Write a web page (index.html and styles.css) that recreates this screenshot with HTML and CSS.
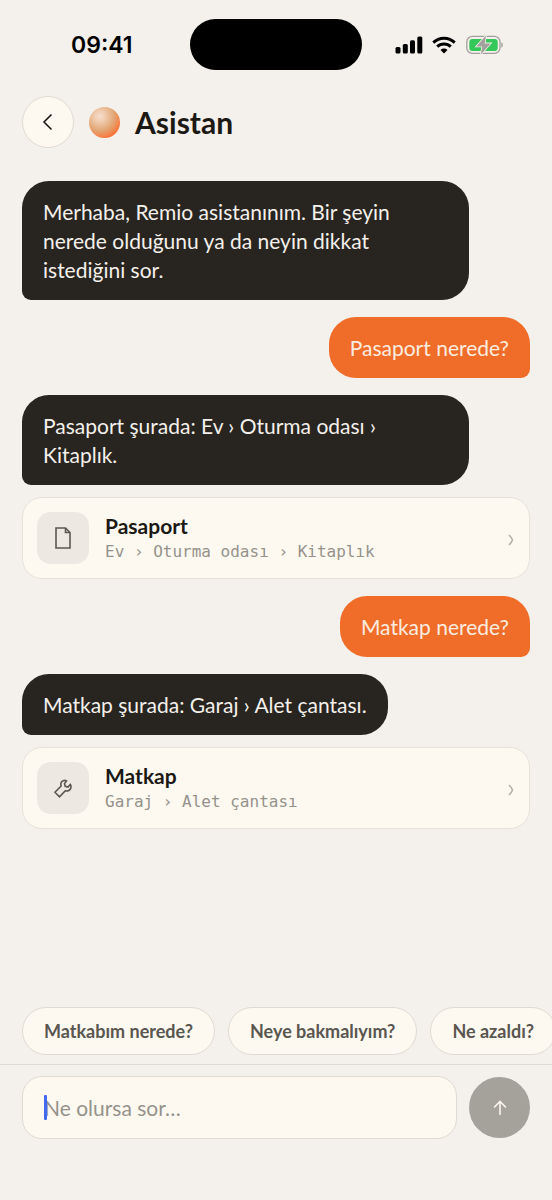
FILE: index.html
```html
<!DOCTYPE html>
<html lang="tr">
<head>
<meta charset="utf-8">
<meta name="viewport" content="width=device-width, initial-scale=1">
<title>Asistan</title>
<link rel="stylesheet" href="styles.css">
</head>
<body>
<div class="app">
  <div class="status">
    <time class="clock">09:41</time>
    <div class="island"></div>
    <div class="indicators">
      <svg width="28" height="18" viewBox="0 0 28 18" aria-hidden="true"><rect x="0.5" y="11" width="5" height="6.5" rx="1.5"/><rect x="7.8" y="8" width="5" height="9.5" rx="1.5"/><rect x="15" y="4.3" width="5" height="13.2" rx="1.5"/><rect x="22.3" y="0.5" width="5" height="17" rx="1.5"/></svg>
      <svg width="24" height="18" viewBox="0 0 24 18" aria-hidden="true"><g fill="none" stroke="#000" stroke-width="3"><path d="M1.3 6.6a15.3 15.3 0 0 1 21.4 0"/><path d="M5.2 10.7a9.8 9.8 0 0 1 13.6 0"/></g><path d="M12 17.6l-3.500-3.700a5 5 0 0 1 7 0z"/></svg>
      <svg width="38" height="20" viewBox="-1 0 38 20" aria-hidden="true"><rect x="0.8" y="1.4" width="33.200" height="17" rx="5.500" fill="none" stroke="#a3a19d" stroke-width="1.300"/><path d="M35.300 7.300v5.400c2-.8 2-4.600 0-5.400z" fill="#a3a19d"/><rect x="3.300" y="3.900" width="28.400" height="12" rx="3" fill="#34c759"/><path d="M20 0.500L10.300 11.400h6L14.800 19.500 24.700 8.400h-6z" fill="#a3a19d" stroke="#f4f0eb" stroke-width="1.600" paint-order="stroke"/></svg>
    </div>
  </div>
  <header class="header">
    <button class="back" type="button" aria-label="Geri"><svg width="12" height="18" viewBox="0 0 12 18"><path d="M9.500 1.500L2 9l7.500 7.500"/></svg></button>
    <span class="orb"></span>
    <h1 class="title">Asistan</h1>
  </header>
  <main class="chat">
    <p class="bubble bot">Merhaba, Remio asistanınım. Bir şeyin nerede olduğunu ya da neyin dikkat istediğini sor.</p>
    <p class="bubble user">Pasaport nerede?</p>
    <div class="answer">
      <p class="bubble bot">Pasaport şurada: Ev › Oturma odası › Kitaplık.</p>
      <a class="card" href="#pasaport">
        <span class="tile"><svg width="24" height="26" viewBox="0 0 24 26"><path d="M5 3h9.500l4.500 4.500V23H5zM14.500 3v4.500H19"/></svg></span>
        <span class="info"><strong class="name">Pasaport</strong><span class="path">Ev › Oturma odası › Kitaplık</span></span>
        <svg class="more" width="6" height="16" viewBox="0 -4 6 16"><path d="M1 1q3 3 3.500 5-.5 2-3.500 5"/></svg>
      </a>
    </div>
    <p class="bubble user">Matkap nerede?</p>
    <div class="answer">
      <p class="bubble bot">Matkap şurada: Garaj › Alet çantası.</p>
      <a class="card" href="#matkap">
        <span class="tile"><svg width="24" height="26" viewBox="0 0 24 26"><path d="M15.500 6c-2-1.400-5-.2-5.600 2.300-.2 1 0 1.900.2 2.700L4 17.300l4.500 4.500 5.900-6.100c2.300.8 4.900-.5 5.500-3 .3-1.200.1-2.500-.6-3.300L17 12 14.200 11.300 13.500 8.600z"/></svg></span>
        <span class="info"><strong class="name">Matkap</strong><span class="path">Garaj › Alet çantası</span></span>
        <svg class="more" width="6" height="16" viewBox="0 -4 6 16"><path d="M1 1q3 3 3.500 5-.5 2-3.500 5"/></svg>
      </a>
    </div>
  </main>
  <div class="chips">
    <button class="chip" type="button">Matkabım nerede?</button>
    <button class="chip" type="button">Neye bakmalıyım?</button>
    <button class="chip" type="button">Ne azaldı?</button>
  </div>
  <form class="composer">
    <div class="field">
      <input class="input" type="text" placeholder="Ne olursa sor…" aria-label="Mesaj">
      <span class="caret"></span>
    </div>
    <button class="send" type="button" aria-label="Gönder"><svg width="16" height="18" viewBox="0 0 16 18"><path d="M8 16V3M2 8.500L8 2.500l6 6"/></svg></button>
  </form>
</div>
</body>
</html>
```
FILE: styles.css
```css
* { box-sizing: border-box; }
body {
  margin: 0;
  background: #f4f0eb;
  color: #1c1915;
  font-family: Lato, "Noto Sans", sans-serif;
}
button, input { font: inherit; color: inherit; }
p, h1 { margin: 0; }
.app { display: flex; flex-direction: column; min-height: 100vh; overflow: hidden; }
.status {
  display: grid;
  grid-template-columns: 1fr 172px 1fr;
  align-items: center;
  padding-top: 19px;
}
.clock { padding-left: 71px; font: 600 23px/28px Inter, sans-serif; color: #000; }
.island { height: 51px; border-radius: 26px; background: #000; }
.indicators { display: flex; align-items: center; gap: 9px; padding-left: 33px; }
.header { display: flex; align-items: center; gap: 15px; padding: 26px 22px 33px; }
.back {
  display: grid; place-items: center;
  width: 52px; height: 52px; padding: 0;
  border: 1px solid #e0dbd2; border-radius: 50%; background: #fdf9f1;
}
.back svg, .tile svg, .send svg, .more { fill: none; stroke: #1c1915; stroke-width: 1.6; }
.orb {
  width: 31px; height: 31px; border-radius: 50%;
  background: radial-gradient(circle at 35% 30%, #f6dccb 0%, #f0ccb0 18%, #e2a775 48%, #f28850 66%, #fb6f33 78%);
}
.title { font-size: 30px; line-height: 36px; font-weight: 700; }
.chat { flex: 1; display: flex; flex-direction: column; gap: 17px; padding: 0 22px; }
.bubble {
  max-width: 88%; padding: 16px 21px;
  border-radius: 27px; font-size: 21px; line-height: 29px;
}
.bot { align-self: flex-start; background: #282420; color: #f4f0eb; border-bottom-left-radius: 9px; }
.user { align-self: flex-end; background: #f06d29; color: #fbece0; border-bottom-right-radius: 9px; }
.answer { display: flex; flex-direction: column; gap: 12px; }
.card {
  display: flex; align-items: center; gap: 16px;
  padding: 14px 15px 14px 14px;
  border: 1px solid #e6e2da; border-radius: 20px;
  background: #fdf9f1; color: inherit; text-decoration: none;
}
.tile { display: grid; place-items: center; width: 52px; height: 52px; border-radius: 14px; background: #ede8e2; }
.tile svg { stroke: #5c5751; }
.info { flex: 1; display: flex; flex-direction: column; }
.name { font-size: 21px; line-height: 28px; font-weight: 700; }
.path { font: 16px/24px "DejaVu Sans Mono", monospace; color: #96928b; }
.more { stroke: #b5b1aa; }
.chips { display: flex; gap: 13px; padding: 0 22px 9px; }
.chip {
  flex: none; height: 48px; padding: 0 21px;
  border: 1px solid #e0dbd2; border-radius: 24px;
  background: #fdf9f1; color: #5a5650;
  font-size: 18px; font-weight: 700;
}
.composer {
  display: flex; align-items: center; gap: 12px;
  padding: 11px 22px 61px; border-top: 1px solid #e0dbd2;
}
.field { position: relative; flex: 1; }
.input {
  display: block; width: 100%; height: 63px; padding: 0 21px;
  border: 1px solid #e0dbd2; border-radius: 20px;
  background: #fdf9f1; font-size: 21px; outline: none;
}
.input::placeholder { color: #96928b; opacity: 1; }
.caret { position: absolute; left: 22px; top: 19px; width: 3px; height: 25px; border-radius: 1px; background: #4269ee; }
.send {
  display: grid; place-items: center;
  width: 61px; height: 61px; padding: 0;
  border: 0; border-radius: 50%; background: #a5a19b;
}
.send svg { stroke: #f9f5ee; }
```
